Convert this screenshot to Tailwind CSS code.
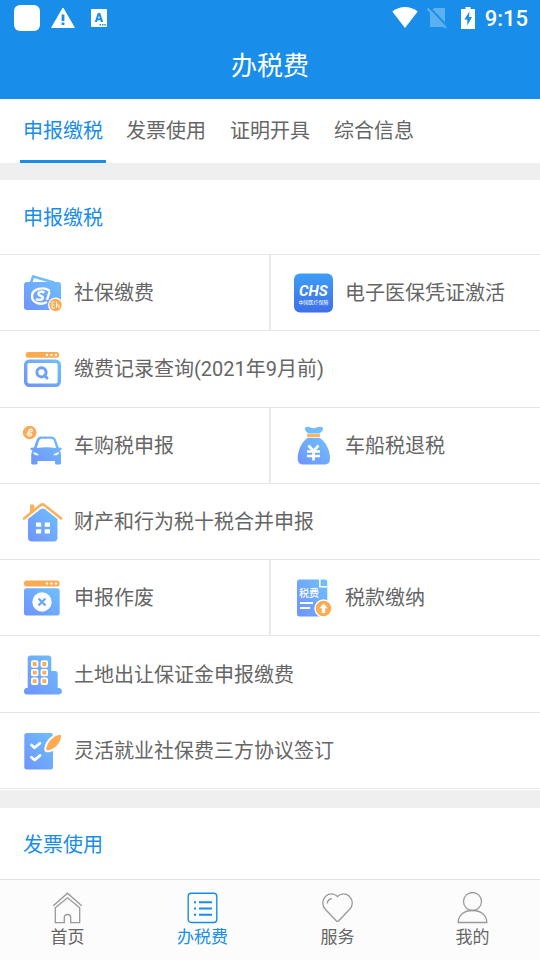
<!DOCTYPE html>
<html lang="zh-CN">
<head>
  <meta charset="UTF-8" />
  <meta name="viewport" content="width=device-width, initial-scale=1.0" />
  <title>办税费</title>
  <script src="https://cdn.jsdelivr.net/npm/@tailwindcss/browser@4"></script>
</head>
<body class="flex flex-col min-h-screen bg-white text-[#666] font-[Roboto,'Noto_Sans_CJK_SC',sans-serif]">

  <!-- Shared gradients -->
  <svg class="absolute w-0 h-0" aria-hidden="true">
    <defs>
      <linearGradient id="blue" x1="1" y1="0" x2="0" y2="1">
        <stop offset="0" stop-color="#6fc0fb" />
        <stop offset="1" stop-color="#6f93fd" />
      </linearGradient>
      <linearGradient id="chs" x1="0" y1="0" x2="0" y2="1">
        <stop offset="0" stop-color="#3d9df5" />
        <stop offset="1" stop-color="#3f6fe8" />
      </linearGradient>
    </defs>
  </svg>

  <header class="bg-[#188de9] text-white">
    <!-- Status bar -->
    <div class="flex items-center justify-between h-9 pl-3.5 pr-3">
      <div class="flex items-center">
        <svg class="w-[26px] h-[26px]" viewBox="0 0 26 26" fill="currentColor" aria-hidden="true"><rect width="26" height="26" rx="6" /></svg>
        <svg class="w-6 h-6 ml-[11px]" viewBox="0 0 24 24" aria-hidden="true">
          <path d="M12 2 23.3 21.5H.7z" fill="#fff" stroke="#fff" stroke-linejoin="round" />
          <path d="M10.6 8.5h2.8V15h-2.8zM10.6 16.5h2.8v2.6h-2.8z" fill="#188de9" />
        </svg>
        <svg class="w-4 h-[18px] ml-4" viewBox="0 0 16 18" aria-hidden="true">
          <rect width="16" height="18" rx="1" fill="#fff" />
          <path d="M6.8 4h2.4l3 9H9.9l-.6-1.8H6.6L6 13H3.8zM8 6.6l-.9 3h1.7z" fill="#188de9" />
          <path d="M8.5 15H10v1.5H8.5zM11 15h1.5v1.5H11zM13.3 15h1.5v1.5h-1.5z" fill="#188de9" />
        </svg>
      </div>
      <div class="flex items-center">
        <svg class="w-[26px] h-[22px]" viewBox="0 0 26 22" fill="currentColor" aria-hidden="true"><path d="M13 21 .3 4.5C4 1.5 8.300 0 13 0S22 1.5 25.7 4.5z" /></svg>
        <svg class="w-5 h-[22px] ml-[9px]" viewBox="0 0 20 22" aria-hidden="true">
          <path d="M7 1H18V20H3V5z" fill="#5db0f0" />
          <path d="M2 0 20 19" stroke="#188de9" stroke-width="2" />
          <path d="M.5 1.5 19 21" stroke="#5db0f0" stroke-width="2" />
        </svg>
        <svg class="w-3.5 h-[22px] ml-[14px]" viewBox="0 0 14 22" aria-hidden="true">
          <path d="M4.5 0h5v2H14v20H0V2h4.5z" fill="#fff" />
          <path d="M8.5 4.5 3.3 12.5h3v6L11 10H8z" fill="#188de9" />
        </svg>
        <time class="ml-[10px] text-[22px] leading-6 pt-0.5 font-medium">9:15</time>
      </div>
    </div>
    <h1 class="h-[63px] pt-3 text-center text-[26px] leading-9">办税费</h1>
  </header>

  <nav class="flex h-16 gap-4 px-5 text-xl" aria-label="分类">
    <a href="#declare" class="flex items-center px-[3px] pt-0.5 border-b-3 border-[#188de9] text-[#188de9]">申报缴税</a>
    <a href="#invoice" class="flex items-center px-1 pt-0.5 border-b-3 border-transparent">发票使用</a>
    <a href="#proof" class="flex items-center px-1 pt-0.5 border-b-3 border-transparent">证明开具</a>
    <a href="#info" class="flex items-center px-1 pt-0.5 border-b-3 border-transparent">综合信息</a>
  </nav>

  <main class="flex flex-col flex-1">
    <section id="declare" class="flex flex-col flex-1 pb-px border-t-[17px] border-[#efefef]">
      <h2 class="flex items-center h-[75px] px-[23px] pt-0.5 text-xl text-[#188de9] border-b border-[#e6e6e6]">申报缴税</h2>

      <div class="grid flex-1 grid-cols-2 auto-rows-fr text-xl">
        <a href="#" class="flex items-center min-h-16 gap-[11px] pl-[23px] border-b border-[#e6e6e6]">
          <svg class="w-10 h-10 shrink-0" viewBox="0 0 40 40" aria-hidden="true">
            <path d="M7.5 11 10.2 3.5 31 9.5" fill="none" stroke="#72bcfb" stroke-width="2.8" stroke-linejoin="round" />
            <rect x="1" y="9" width="37" height="28" rx="3" fill="url(#blue)" />
            <path d="M26 17.5C21 13.5 9 15.5 9 23s9 9 14 6.5" fill="none" stroke="#fff" stroke-width="2.4" stroke-linecap="round" />
            <path d="M21.5 19.5c-3-1.5-6.5-.5-6 1.8.5 2 4.5 1.2 4.3 3.6-.2 2.2-4.5 2.5-6.800 1M26.5 19l-2.5 8" fill="none" stroke="#fff" stroke-width="2.4" />
            <circle cx="32.5" cy="32" r="7.5" fill="#fff" />
            <circle cx="32.5" cy="32" r="6.2" fill="#fdab50" />
            <path d="M32 29h-3v6h3M29 32h2.5M33.5 28.5V35M33.5 32q2.5-1 2.5 1v2" fill="none" stroke="#fff" stroke-width=".9" />
          </svg>
          社保缴费
        </a>
        <a href="#" class="relative flex items-center min-h-16 gap-3 pl-[23px] border-b border-[#e6e6e6] before:absolute before:inset-y-0 before:-left-px before:w-0.5 before:bg-[#e9e9e9]">
          <svg class="w-10 h-10 shrink-0" viewBox="0 0 40 40" aria-hidden="true">
            <rect x="1" y=".5" width="39" height="39" rx="6" fill="url(#chs)" />
            <text x="6" y="22.5" class="text-[15px] font-bold italic" fill="#fff">CHS</text>
            <text x="5.5" y="31" class="text-[5px]" fill="#fff">中国医疗保障</text>
          </svg>
          电子医保凭证激活
        </a>

        <a href="#" class="flex items-center col-span-2 min-h-16 gap-[11px] pl-[23px] border-b border-[#e6e6e6]">
          <svg class="w-10 h-10 shrink-0" viewBox="0 0 40 40" aria-hidden="true">
            <rect x="2.7" y="3" width="33.5" height="5.7" rx="2.5" fill="#fdab50" />
            <g fill="#fff"><circle cx="24" cy="5.9" r="1.2" /><circle cx="28.5" cy="5.9" r="1.2" /><circle cx="33" cy="5.9" r="1.2" /></g>
            <rect x="2.7" y="12.2" width="33.6" height="24" rx="3.5" fill="none" stroke="url(#blue)" stroke-width="3.4" />
            <circle cx="18.5" cy="23.3" r="4.6" fill="none" stroke="#719ffc" stroke-width="3" />
            <path d="m21.5 26.5 2.5 2.5" stroke="#719ffc" stroke-width="3" stroke-linecap="round" />
          </svg>
          缴费记录查询(2021年9月前)
        </a>

        <a href="#" class="flex items-center min-h-16 gap-[11px] pl-[23px] pt-px border-b border-[#e6e6e6]">
          <svg class="w-10 h-10 shrink-0" viewBox="0 0 40 40" aria-hidden="true">
            <circle cx="6.7" cy="6.5" r="6.8" fill="#fbab58" />
            <path d="M4.5 6.5 9 5.5C10 3 8 2.5 6.5 4S4 9.5 5.5 10 8.5 9 9 8M3.5 8.5 8.5 7.5" fill="none" stroke="#fff" stroke-width="1.1" />
            <path d="M11 21.5 13.6 14Q14.8 10.5 18 10.5H28.5Q31.7 10.5 33 14L35.7 21.5 38 21.7Q39.5 22.5 38.5 23.8L36.8 24.3Q38 26 38 29V37Q38 38.5 36.5 38.5H33.5Q32 38.5 32 37V35H14.5V37Q14.5 38.5 13 38.5H9.7Q8.2 38.5 8.2 37V29Q8.2 26 9.7 24.3L7.7 23.8Q6.5 22.5 8 21.7z" fill="url(#blue)" />
            <path d="M13.7 22 16 15Q16.7 12.8 19 12.8H28Q30.2 12.8 31 15L33.2 22Q23.5 20.5 13.7 22z" fill="#fff" />
            <path d="M10 26.2Q14.5 26.5 15.8 29.2 11 30 10 26.2zM36.2 26.2Q31.7 26.5 30.4 29.2 35.2 30 36.2 26.2z" fill="#fff" />
          </svg>
          车购税申报
        </a>
        <a href="#" class="relative flex items-center min-h-16 gap-3 pl-[23px] pt-px border-b border-[#e6e6e6] before:absolute before:inset-y-0 before:-left-px before:w-0.5 before:bg-[#e9e9e9]">
          <svg class="w-10 h-10 shrink-0" viewBox="0 0 40 40" aria-hidden="true">
            <path d="M12 2Q14-.3 17.5 1.5 20.5 3 23.5 1.5 27.5-.3 30 2 30.5 5 26.5 7.5H15Q11.5 5 12 2z" fill="#6fbdf9" />
            <rect x="14" y="8" width="13" height="3.2" rx="1" fill="#fdb264" />
            <path d="M14.5 12H27C33 16 37 24.5 37 32.5 37 37 34.5 38.5 31 38.5H10.5C7 38.5 4.7 37 4.7 32.5 4.7 24.5 8.5 16 14.5 12z" fill="url(#blue)" />
            <path d="m15.5 19.5 5 5.5 5-5.5M20.5 25V34.5M14 25.5H27M14 30H27" fill="none" stroke="#fff" stroke-width="2.7" />
          </svg>
          车船税退税
        </a>

        <a href="#" class="flex items-center col-span-2 min-h-16 gap-[11px] pl-[23px] pt-px border-b border-[#e6e6e6]">
          <svg class="w-10 h-10 shrink-0" viewBox="0 0 40 40" aria-hidden="true">
            <path d="M7 11V3.5Q7 2.5 8 2.5H10.2Q11.2 2.5 11.2 3.5V8z" fill="#fdb05a" />
            <path d="M1 16.5 17.5 3.2Q19.5 1.5 21.5 3.2L38.2 16.5" fill="none" stroke="#fdb05a" stroke-width="2.6" stroke-linecap="round" />
            <path d="M5 17 17.5 7.3Q19.7 5.8 22 7.3L34.5 17V35.5Q34.5 39.5 30.5 39.5H9Q5 39.5 5 35.5z" fill="url(#blue)" />
            <path d="M13 20.5h5.2v4.2H13zM21.7 20.5h5.2v4.2h-5.2zM13 27.3h5.2v4.2H13zM21.7 27.3h5.2v4.2h-5.2z" fill="#fff" />
          </svg>
          财产和行为税十税合并申报
        </a>

        <a href="#" class="flex items-center min-h-16 gap-[11px] pl-[23px] border-b border-[#e6e6e6]">
          <svg class="w-10 h-10 shrink-0" viewBox="0 0 40 40" aria-hidden="true">
            <rect x="1" y="2.5" width="35.5" height="6" rx="2.5" fill="#fdab50" />
            <g fill="#fff"><circle cx="24" cy="5.5" r="1.2" /><circle cx="28.5" cy="5.5" r="1.2" /><circle cx="33" cy="5.5" r="1.2" /></g>
            <rect x="1" y="10.2" width="35.7" height="27.3" rx="2.5" fill="url(#blue)" />
            <circle cx="19" cy="24" r="9.7" fill="#fff" />
            <path d="m15.5 20.5 7 7M22.5 20.5l-7 7" stroke="#6da6fb" stroke-width="2.3" />
          </svg>
          申报作废
        </a>
        <a href="#" class="relative flex items-center min-h-16 gap-3 pl-[23px] border-b border-[#e6e6e6] before:absolute before:inset-y-0 before:-left-px before:w-0.5 before:bg-[#e9e9e9]">
          <svg class="w-10 h-10 shrink-0" viewBox="0 0 40 40" aria-hidden="true">
            <rect x="4" y="1.5" width="30.3" height="37" rx="2.5" fill="url(#blue)" />
            <path d="M26.8 1V8.8H34.5" fill="none" stroke="#fff" stroke-width="1.6" />
            <text x="6" y="18.5" class="text-[10px] font-medium" fill="#fff">税费</text>
            <path d="M7 25H20M7 30H17" stroke="#fff" stroke-width="2" />
            <circle cx="30.5" cy="30.5" r="9.2" fill="#fff" />
            <circle cx="30.5" cy="30.5" r="7.8" fill="#fdab50" />
            <path d="m30.5 25.5 4.3 4.8h-2.6v4.7h-3.4v-4.7h-2.6z" fill="#fff" />
          </svg>
          税款缴纳
        </a>

        <a href="#" class="flex items-center col-span-2 min-h-16 gap-[11px] pl-[23px] pt-px border-b border-[#e6e6e6]">
          <svg class="w-10 h-10 shrink-0" viewBox="0 0 40 40" aria-hidden="true">
            <path d="M4.7 33V3.5Q4.7.5 7.7.5H25.3Q28.3.5 28.3 3.5V16H32.5Q34.7 16 34.7 18.5V33H36.5Q39 33.5 39 36.3T36.5 39.5H3.5Q1 39.2 1 36.3T3.5 33z" fill="url(#blue)" />
            <g fill="#fdab50" stroke="#fff" stroke-width="1.8">
              <rect x="8.9" y="6.2" width="5.6" height="5.6" rx="1" /><rect x="18.5" y="6.2" width="5.6" height="5.6" rx="1" />
              <rect x="8.9" y="14.8" width="5.6" height="5.6" rx="1" /><rect x="18.5" y="14.8" width="5.6" height="5.6" rx="1" />
              <rect x="8.9" y="23.4" width="5.6" height="5.6" rx="1" /><rect x="18.5" y="23.4" width="5.6" height="5.6" rx="1" />
            </g>
          </svg>
          土地出让保证金申报缴费
        </a>

        <a href="#" class="flex items-center col-span-2 min-h-16 gap-[11px] pl-[23px] pt-px border-b border-[#e6e6e6]">
          <svg class="w-10 h-10 shrink-0" viewBox="0 0 40 40" aria-hidden="true">
            <rect x="1.3" y="2" width="28.7" height="36.5" rx="2.5" fill="url(#blue)" />
            <path d="m8.5 14 3 2.8 5.5-4.6M8.5 26.3l3 2.8 5.5-4.6" fill="none" stroke="#fff" stroke-width="2.8" stroke-linecap="round" stroke-linejoin="round" />
            <path d="M38 3.7C33 3.7 27.5 8 25 12.5 23.5 15.5 22.7 18 23.5 19 24.5 20 28.5 18.8 31.5 16.5 36 13 38.5 8 38 3.7z" fill="#fdab50" stroke="#fff" stroke-width="4" stroke-linejoin="round" paint-order="stroke" />
          </svg>
          灵活就业社保费三方协议签订
        </a>
      </div>
    </section>

    <section id="invoice" class="border-t-[18px] border-[#efefef]">
      <h2 class="flex items-center h-[71px] px-[23px] pt-0.5 text-xl text-[#188de9]">发票使用</h2>
    </section>
  </main>

  <!-- Bottom navigation -->
  <nav class="sticky bottom-0 grid grid-cols-4 h-[81px] pt-3 bg-[#fcfcfc] border-t border-[#e2e2e2] text-[17px] leading-[26px]" aria-label="主导航">
    <a href="#" class="flex flex-col items-center">
      <svg class="w-8 h-8" viewBox="0 0 32 32" fill="none" stroke="#999" stroke-width="1.3" aria-hidden="true">
        <path d="M1.3 13.7 15.5 1.2 29.7 13.7" />
        <path d="M3.3 15.8 15.5 5.8 27.7 15.8V30.7H18.7V25.5Q18.7 22.5 15.5 22.5T12.3 25.5V30.7H3.3z" />
      </svg>
      首页
    </a>
    <a href="#" class="flex flex-col items-center text-[#188de9]" aria-current="page">
      <svg class="w-8 h-8" viewBox="0 0 32 32" fill="none" stroke="currentColor" aria-hidden="true">
        <rect x="1.2" y="1.3" width="28.6" height="29.2" rx="3" stroke-width="1.4" />
        <path d="M12 10.3H25M12 16.5H25M12 22.7H25M7 10.3H9M7 16.5H9M7 22.7H9" stroke-width="2" />
      </svg>
      办税费
    </a>
    <a href="#" class="flex flex-col items-center">
      <svg class="w-8 h-8" viewBox="0 0 32 32" fill="none" stroke="#999" stroke-width="1.3" aria-hidden="true">
        <path d="M15.5 4.5C12 1 7 1.2 3.7 4.2-.2 8-.2 13.5 3.3 17.2L14.2 28.7Q15.5 30 16.8 28.7L27.7 17.2C31.2 13.5 31.2 8 27.3 4.2 24 1.2 19 1 15.5 4.5z" />
        <path d="M5.3 11.5Q5.5 7.5 9.8 6.5" />
      </svg>
      服务
    </a>
    <a href="#" class="flex flex-col items-center">
      <svg class="w-8 h-8" viewBox="0 0 32 32" fill="none" stroke="#999" stroke-width="1.3" aria-hidden="true">
        <circle cx="15.5" cy="9.5" r="9" />
        <path d="M1.2 30.5C1.2 23 7 18.5 15.5 18.5S29.8 23 29.8 30.5z" />
      </svg>
      我的
    </a>
  </nav>

</body>
</html>
